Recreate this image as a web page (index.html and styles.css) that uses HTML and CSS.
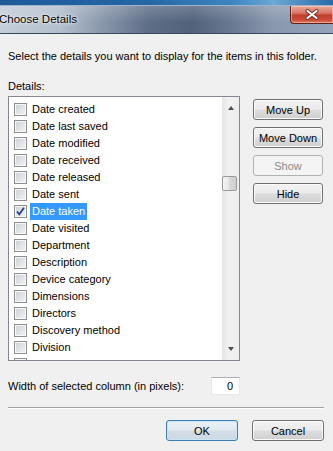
FILE: index.html
```html
<!DOCTYPE html>
<html lang="en">
<head>
  <meta charset="UTF-8" />
  <meta name="viewport" content="width=device-width, initial-scale=1" />
  <title>Choose Details</title>
  <link rel="stylesheet" href="styles.css">
</head>
<body>

  <div class="frame-top"></div>
  <div class="title-bar">
    <span class="title">Choose Details</span>
    <button class="close-btn" aria-label="Close">
      <svg width="14" height="11" viewBox="0 0 14 11">
        <path d="M2.5 2 L11.5 9 M11.5 2 L2.5 9" stroke="#6b2a22" stroke-width="4" stroke-linecap="round" />
        <path d="M2.5 2 L11.5 9 M11.5 2 L2.5 9" stroke="#ffffff" stroke-width="2.2" stroke-linecap="round" />
      </svg>
    </button>
  </div>

  <div class="dialog">
    <p class="intro">Select the details you want to display for the items in this folder.</p>

    <span class="caption">Details:</span>

    <div class="details-row">
      <div class="list-box">
        <ul class="items">
          <li><span class="check"></span><span class="name">Date created</span></li>
          <li><span class="check"></span><span class="name">Date last saved</span></li>
          <li><span class="check"></span><span class="name">Date modified</span></li>
          <li><span class="check"></span><span class="name">Date received</span></li>
          <li><span class="check"></span><span class="name">Date released</span></li>
          <li><span class="check"></span><span class="name">Date sent</span></li>
          <li class="selected">
            <span class="check">
              <svg width="11" height="11" viewBox="0 0 11 11">
                <path d="M2 5.5 L4.3 8.3 L9 1.8" fill="none" stroke="#233f8e" stroke-width="1.7" />
              </svg>
            </span>
            <span class="name">Date taken</span>
          </li>
          <li><span class="check"></span><span class="name">Date visited</span></li>
          <li><span class="check"></span><span class="name">Department</span></li>
          <li><span class="check"></span><span class="name">Description</span></li>
          <li><span class="check"></span><span class="name">Device category</span></li>
          <li><span class="check"></span><span class="name">Dimensions</span></li>
          <li><span class="check"></span><span class="name">Directors</span></li>
          <li><span class="check"></span><span class="name">Discovery method</span></li>
          <li><span class="check"></span><span class="name">Division</span></li>
          <li><span class="check"></span></li>
        </ul>
        <div class="scrollbar">
          <span class="arrow-box"><span class="arrow up"></span></span>
          <span class="track"><span class="thumb"></span></span>
          <span class="arrow-box"><span class="arrow down"></span></span>
        </div>
      </div>

      <div class="side-buttons">
        <button>Move Up</button>
        <button>Move Down</button>
        <button disabled>Show</button>
        <button>Hide</button>
      </div>
    </div>

    <div class="width-row">
      <label for="colWidth">Width of selected column (in pixels):</label>
      <input type="text" id="colWidth" value="0" />
    </div>

    <hr class="separator" />

    <div class="footer">
      <button class="default">OK</button>
      <button>Cancel</button>
    </div>
  </div>

</body>
</html>
```

FILE: styles.css
```css
body {
  margin: 0;
  width: 333px;
  height: 451px;
  overflow: hidden;
  background-color: #f0f0f0;
  color: #000;
  font-family: "Liberation Sans", Arial, sans-serif;
  font-size: 11px;
}
.frame-top {
  height: 6px;
  background: linear-gradient(90deg, #1c5a98 0%, #2667a6 45%, #3d86c2 70%, #6aa8d6 82%, #2a6aa8 100%);
  border-bottom: 1px solid #9fb3cc;
  box-sizing: border-box;
}
.title-bar {
  height: 27px;
  display: flex;
  justify-content: space-between;
  align-items: flex-start;
  background:
    linear-gradient(rgba(255, 255, 255, 0.18), rgba(255, 255, 255, 0) 60%),
    linear-gradient(90deg, #c4cdd9 0%, #b3bfcd 18%, #8593a8 32%, #5d6d86 45%, #52627b 58%, #6a7a93 70%, #8a98ae 82%, #95a3b8 100%);
  border-bottom: 1px solid #39475b;
}
.title {
  font-size: 11.5px;
  line-height: 27px;
  margin-left: -1px;
  text-shadow: 0 0 5px rgba(255, 255, 255, 0.9), 0 0 2px rgba(255, 255, 255, 0.9);
}
.close-btn {
  width: 43px;
  height: 18px;
  padding: 0;
  border: 1px solid #5b1f17;
  border-top: none;
  border-right: none;
  border-radius: 0 0 0 4px;
  background: linear-gradient(#e9a898 0%, #d9786a 40%, #c2412e 55%, #c94a35 80%, #e0765c 100%);
  display: flex;
  align-items: center;
  justify-content: center;
  box-shadow: inset 0 0 0 1px rgba(255, 220, 210, 0.5);
}
.dialog {
  padding: 0 9px 0 8px;
}
.intro {
  margin: 15px 0 0;
  line-height: 15px;
  white-space: nowrap;
}
.caption {
  display: block;
  margin-top: 15px;
  line-height: 15px;
}
.details-row {
  display: flex;
  gap: 13px;
  margin-top: 2px;
}
.list-box {
  width: 232px;
  height: 265px;
  box-sizing: border-box;
  border: 1px solid #828790;
  background-color: #fff;
  display: flex;
}
.items {
  flex: 1;
  list-style: none;
  margin: 0;
  padding: 4px 0 0 5px;
  overflow: hidden;
}
.items li {
  height: 17px;
  display: flex;
  align-items: center;
}
.check {
  width: 13px;
  height: 13px;
  box-sizing: border-box;
  border: 1px solid #8e8f8f;
  background: linear-gradient(135deg, #cbd0d6, #f3f4f5);
  box-shadow: inset 0 0 0 1px #f7f7f7;
  display: flex;
  align-items: center;
  justify-content: center;
  flex-shrink: 0;
}
.name {
  margin-left: 3px;
  padding: 0 2px;
  line-height: 17px;
  white-space: nowrap;
}
.selected .name {
  background-color: #3399ff;
  color: #fff;
}
.scrollbar {
  width: 17px;
  display: flex;
  flex-direction: column;
  background: linear-gradient(90deg, #e6e6e6, #f2f2f2 40%, #ededed);
}
.arrow-box {
  height: 22px;
  display: flex;
  align-items: center;
  justify-content: center;
}
.arrow {
  width: 0;
  height: 0;
  border-left: 3.5px solid transparent;
  border-right: 3.5px solid transparent;
}
.arrow.up {
  border-bottom: 4px solid #4a4f57;
}
.arrow.down {
  border-top: 4px solid #4a4f57;
}
.track {
  flex: 1;
}
.thumb {
  display: block;
  width: 15px;
  height: 15px;
  margin-top: 57px;
  box-sizing: border-box;
  border: 1px solid #9a9a9a;
  border-radius: 2px;
  background: linear-gradient(90deg, #f4f4f4, #e6e6e6 50%, #d8d8d8 50%, #cecece);
}
button {
  font: inherit;
  color: #000;
  padding: 0;
  box-sizing: border-box;
  border: 1px solid #707070;
  border-radius: 3px;
  background: linear-gradient(#f2f2f2 0%, #ebebeb 48%, #dddddd 52%, #cfcfcf 100%);
  box-shadow: inset 0 0 0 1px #fbfbfb;
}
button:disabled {
  border-color: #adb2b5;
  background: #f4f4f4;
  color: #8a8a8a;
  box-shadow: none;
}
.side-buttons {
  display: flex;
  flex-direction: column;
  gap: 7px;
  margin-top: 3px;
}
.side-buttons button {
  width: 70px;
  height: 21px;
}
.width-row {
  width: 232px;
  display: flex;
  justify-content: space-between;
  align-items: center;
  margin-top: 16px;
}
.width-row input {
  width: 29px;
  height: 18px;
  box-sizing: border-box;
  border: 1px solid #e3e9ef;
  border-top-color: #abadb3;
  font: inherit;
  text-align: right;
  padding: 0 6px 0 0;
  background: #fff;
}
.separator {
  margin: 12px 0 0;
  border: none;
  border-top: 1px solid #a0a0a0;
  border-bottom: 1px solid #fff;
}
.footer {
  display: flex;
  justify-content: flex-end;
  gap: 14px;
  margin-top: 11px;
}
.footer button {
  width: 72px;
  height: 21px;
}
.footer .default {
  border-color: #3c7fb1;
  box-shadow: inset 0 0 0 1px #c9e6f7;
  background: linear-gradient(#eaf1f7 0%, #e1e9f1 48%, #d3dee8 52%, #ccd8e3 100%);
}
```
